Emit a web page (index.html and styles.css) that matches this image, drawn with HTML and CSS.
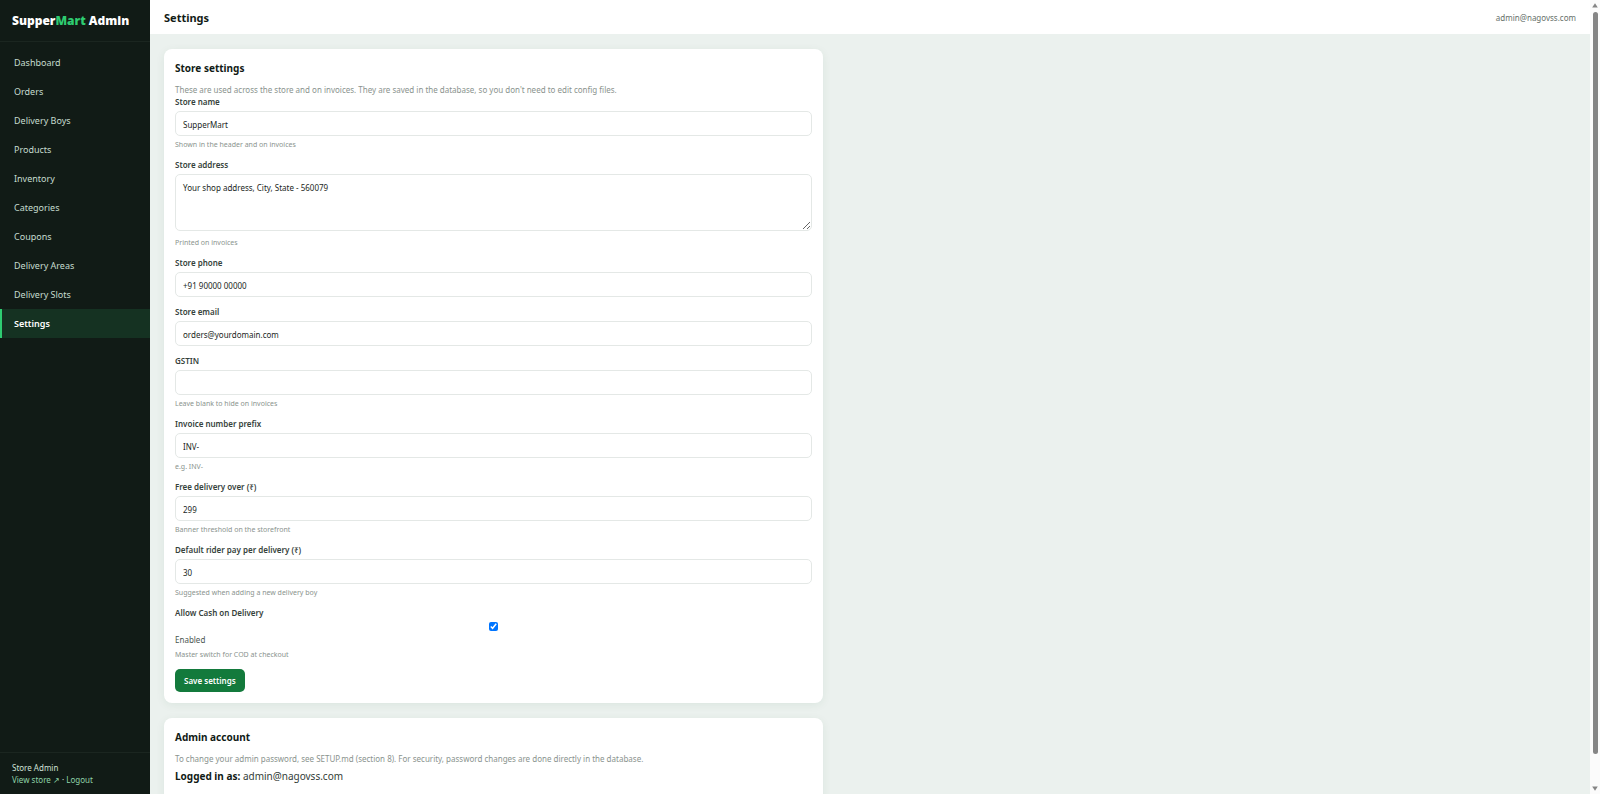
FILE: index.html
```
<!DOCTYPE html>
<html lang="en">
<head>
    <meta charset="UTF-8">
    <meta name="viewport" content="width=device-width, initial-scale=1.0">
    <title>Settings - SupperMart Admin</title>
    <link rel="stylesheet" href="styles.css">
</head>
<body>
    <aside class="sidebar">
        <div class="brand">Supper<span>Mart</span> Admin</div>
        <nav class="nav">
            <a href="#">Dashboard</a>
            <a href="#">Orders</a>
            <a href="#">Delivery Boys</a>
            <a href="#">Products</a>
            <a href="#">Inventory</a>
            <a href="#">Categories</a>
            <a href="#">Coupons</a>
            <a href="#">Delivery Areas</a>
            <a href="#">Delivery Slots</a>
            <a href="#" class="active">Settings</a>
        </nav>
        <div class="sidebar-foot">
            <div>Store Admin</div>
            <div><a href="#">View store ↗</a> · <a href="#">Logout</a></div>
        </div>
    </aside>

    <div class="main">
        <header class="topbar">
            <h1>Settings</h1>
            <span class="user">admin@nagovss.com</span>
        </header>
        <main class="content">
            <form class="card">
                <h2>Store settings</h2>
                <p class="muted">These are used across the store and on invoices. They are saved in the database, so you don't need to edit config files.</p>
                <div class="field">
                    <label for="storeName">Store name</label>
                    <input type="text" id="storeName" value="SupperMart">
                    <small>Shown in the header and on invoices</small>
                </div>
                <div class="field">
                    <label for="storeAddress">Store address</label>
                    <textarea id="storeAddress">Your shop address, City, State - 560079</textarea>
                    <small>Printed on invoices</small>
                </div>
                <div class="field">
                    <label for="storePhone">Store phone</label>
                    <input type="text" id="storePhone" value="+91 90000 00000">
                </div>
                <div class="field">
                    <label for="storeEmail">Store email</label>
                    <input type="text" id="storeEmail" value="orders@yourdomain.com">
                </div>
                <div class="field">
                    <label for="gstin">GSTIN</label>
                    <input type="text" id="gstin">
                    <small>Leave blank to hide on invoices</small>
                </div>
                <div class="field">
                    <label for="invoicePrefix">Invoice number prefix</label>
                    <input type="text" id="invoicePrefix" value="INV-">
                    <small>e.g. INV-</small>
                </div>
                <div class="field">
                    <label for="freeDelivery">Free delivery over (₹)</label>
                    <input type="text" id="freeDelivery" value="299">
                    <small>Banner threshold on the storefront</small>
                </div>
                <div class="field">
                    <label for="riderPay">Default rider pay per delivery (₹)</label>
                    <input type="text" id="riderPay" value="30">
                    <small>Suggested when adding a new delivery boy</small>
                </div>
                <div class="field">
                    <label for="allowCod">Allow Cash on Delivery</label>
                    <input type="checkbox" id="allowCod" checked>
                    <label for="allowCod" class="check-label">Enabled</label>
                    <small>Master switch for COD at checkout</small>
                </div>
                <button type="submit" class="btn">Save settings</button>
            </form>

            <section class="card">
                <h2>Admin account</h2>
                <p class="muted">To change your admin password, see SETUP.md (section 8). For security, password changes are done directly in the database.</p>
                <p class="account"><strong>Logged in as:</strong> admin@nagovss.com</p>
            </section>
        </main>
    </div>

    <div class="scrollbar" aria-hidden="true">
        <svg width="6" height="5" viewBox="0 0 6 5"><path d="M3 0.3 L5.8 4.6 H0.2 Z"/></svg>
        <div class="thumb"></div>
        <svg width="6" height="5" viewBox="0 0 6 5"><path d="M3 4.7 L5.8 0.4 H0.2 Z"/></svg>
    </div>
</body>
</html>
```
FILE: styles.css
```
* {
    box-sizing: border-box;
}
body {
    font-family: "Noto Sans", "Open Sans", sans-serif;
    font-size: 10px;
    line-height: 15px;
    margin: 0;
    height: 100vh;
    display: flex;
    overflow: hidden;
    background: #ebf1ee;
    color: #111b16;
}
a {
    text-decoration: none;
}

/* Sidebar */
.sidebar {
    width: 150px;
    flex-shrink: 0;
    display: flex;
    flex-direction: column;
    background: #111b16;
    color: #cfe0d6;
}
.brand {
    padding: 13px 12px;
    border-bottom: 1px solid #1b2620;
    font-size: 12px;
    font-weight: 900;
    color: #fff;
}
.brand span {
    color: #2ecc71;
}
.nav {
    flex: 1;
    padding-top: 6px;
}
.nav a {
    display: block;
    padding: 7px 12px;
    border-left: 2px solid transparent;
    font-size: 9px;
    color: #c5dccf;
}
.nav a.active {
    background: #153222;
    border-left-color: #2ecc71;
    color: #fff;
    font-weight: 600;
}
.sidebar-foot {
    padding: 9px 12px 8px;
    border-top: 1px solid #1b2620;
    font-size: 8px;
    line-height: 12px;
}
.sidebar-foot a {
    color: #8fd3a8;
}

/* Main area */
.main {
    flex: 1;
    min-width: 0;
}
.topbar {
    display: flex;
    justify-content: space-between;
    align-items: center;
    height: 34px;
    padding: 0 14px;
    background: #fff;
}
.topbar h1 {
    margin: 0;
    font-size: 11px;
    font-weight: 700;
}
.user {
    font-size: 8px;
    color: #66706a;
}
.content {
    padding: 15px 14px;
}
.card {
    max-width: 659px;
    margin-bottom: 15px;
    padding: 11px;
    background: #fff;
    border-radius: 8px;
    box-shadow: 0 2px 10px rgba(20, 83, 45, 0.07);
}
.card h2 {
    margin: 0 0 8px;
    font-size: 10px;
    line-height: 16px;
    font-weight: 700;
}
.muted {
    margin: 0;
    font-size: 8px;
    line-height: 12px;
    color: #8a938e;
}
.account {
    margin: 4px 0 12px;
    color: #333d37;
}
.account strong {
    color: #111b16;
}

/* Form */
.field {
    margin-bottom: 9px;
}
.field label {
    display: block;
    margin-bottom: 3px;
    font-size: 8px;
    line-height: 12px;
    font-weight: 600;
    color: #36423b;
}
.field input[type="text"],
.field textarea {
    display: block;
    width: 100%;
    height: 25px;
    padding: 5px 7px 3px;
    border: 1px solid #e4e8e6;
    border-radius: 5px;
    background: #fff;
    font-family: inherit;
    font-size: 8px;
    line-height: 15px;
    color: #1b1f1d;
}
.field textarea {
    height: 57px;
    margin-bottom: 6px;
    resize: vertical;
}
.field small {
    display: block;
    margin-top: 3px;
    font-size: 7px;
    line-height: 11px;
    color: #8a938e;
}
.field input[type="checkbox"] {
    display: block;
    width: 9px;
    height: 9px;
    margin: 0 auto 3px;
    accent-color: #0075ff;
}
.field .check-label {
    font-weight: 400;
    color: #4b5650;
}
.btn {
    padding: 4px 9px;
    border: 0;
    border-radius: 5px;
    background: #137a3c;
    color: #fff;
    font-family: inherit;
    font-size: 8px;
    line-height: 15px;
    font-weight: 600;
    cursor: pointer;
}

/* Scrollbar */
.scrollbar {
    display: flex;
    flex-direction: column;
    align-items: center;
    gap: 4px;
    width: 10px;
    padding: 3px 0;
    background: #fbfbfb;
    fill: #858585;
}
.thumb {
    width: 5px;
    flex: 1;
    margin-bottom: 28px;
    border-radius: 3px;
    background: #858585;
}
```
